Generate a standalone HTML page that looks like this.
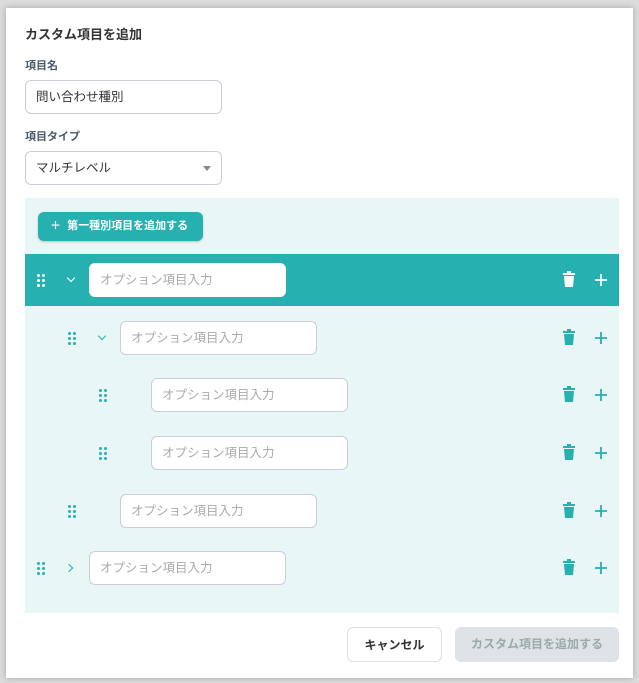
<!DOCTYPE html>
<html><head><meta charset="utf-8"><style>
*{box-sizing:border-box;margin:0;padding:0}
body{width:639px;height:683px;background:#dcdcdc;font-family:"Liberation Sans","Noto Sans CJK JP",sans-serif;position:relative;overflow:hidden}
.card{position:absolute;left:6px;top:8px;width:627px;height:670px;background:#fff;box-shadow:0 0 6px rgba(0,0,0,.25)}
.abs{position:absolute}
.title{left:25px;top:24px;font-size:13px;font-weight:bold;color:#333}
.lbl{font-size:11px;font-weight:bold;color:#4a5a6a}
.inp{position:absolute;height:34px;border:1px solid #ccd;border-radius:6px;background:#fff;font-size:12.5px;color:#333;padding-left:10px;line-height:32px}
.ph{color:#aaa;font-size:12.5px}
.panel{left:25px;top:198px;width:594px;height:415px;background:#e8f6f6}
.addbtn{left:38px;top:212px;width:165px;height:29px;background:#26b0b0;border-radius:6px;color:#fff;font-size:11px;font-weight:bold;line-height:29px;padding-left:12px;box-shadow:0 1px 2px rgba(0,0,0,.2)}
.hl{left:25px;top:254px;width:594px;height:52px;background:#26b0b0}
.dots{position:absolute;width:8px;height:12px}
.dots i{position:absolute;width:3px;height:3px;border-radius:50%}
.chev{position:absolute;width:6px;height:6px;border-right:1.8px solid;border-bottom:1.8px solid}
.btn{position:absolute;border-radius:6px;font-size:12px;font-weight:bold;text-align:center;line-height:35px;height:35px;top:627px}
</style></head><body>
<div class="card"></div>
<div class="abs title">カスタム項目を追加</div>
<div class="abs lbl" style="left:25px;top:57px">項目名</div>
<div class="inp" style="left:25px;top:80px;width:197px">問い合わせ種別</div>
<div class="abs lbl" style="left:25px;top:128px">項目タイプ</div>
<div class="inp" style="left:25px;top:151px;width:197px">マルチレベル<span style="position:absolute;right:10px;top:14px;border-left:4px solid transparent;border-right:4px solid transparent;border-top:5px solid #888"></span></div>
<div class="abs panel"></div>
<div class="abs addbtn">＋&nbsp; 第一種別項目を追加する</div>
<div class="abs hl"></div>
<div id="rows"></div>
<div class="btn" style="left:347px;width:95px;border:1px solid #dde;color:#333;background:#fff">キャンセル</div>
<div class="btn" style="left:455px;width:164px;background:#dfe2e7;color:#9aa">カスタム項目を追加する</div>
<script>
var rows=[[280,0,1,1],[338,1,1,0],[395,2,0,0],[453,2,0,0],[511,1,0,0],[568,0,2,0]];
var h='';
rows.forEach(function(r){
 var y=r[0],l=r[1],hl=r[3],c=hl?'#fff':'#26b0b0';
 var dx=37+31*l;
 h+='<div class="dots" style="left:'+dx+'px;top:'+(y-6)+'px">';
 [[0,0],[5,0],[0,5],[5,5],[0,10],[5,10]].forEach(function(p){h+='<i style="left:'+p[0]+'px;top:'+p[1]+'px;background:'+c+'"></i>'});
 h+='</div>';
 var cx=68+31*l;
 if(r[2]==1)h+='<div class="chev" style="left:'+cx+'px;top:'+(y-5)+'px;color:'+c+';transform:rotate(45deg)"></div>';
 if(r[2]==2)h+='<div class="chev" style="left:'+(cx-2)+'px;top:'+(y-3)+'px;color:'+c+';transform:rotate(-45deg)"></div>';
 var ix=89+31*l;
 h+='<div class="inp" style="left:'+ix+'px;top:'+(y-17)+'px;width:197px;'+(hl?'border-color:#fff':'')+'"><span class="ph">オプション項目入力</span></div>';
 h+='<svg class="abs" style="left:562px;top:'+(y-9)+'px" width="14" height="17" viewBox="0 0 14 17"><rect x="1" y="2" width="12" height="2" fill="'+c+'"/><rect x="5" y="0" width="4" height="2" fill="'+c+'"/><path d="M2 5h10l-1 11H3z" fill="'+c+'"/></svg>';
 h+='<svg class="abs" style="left:594px;top:'+(y-7)+'px" width="14" height="14"><path d="M7 1v12M1 7h12" stroke="'+c+'" stroke-width="1.8"/></svg>';
});
document.getElementById('rows').innerHTML=h;
</script>
</body></html>
